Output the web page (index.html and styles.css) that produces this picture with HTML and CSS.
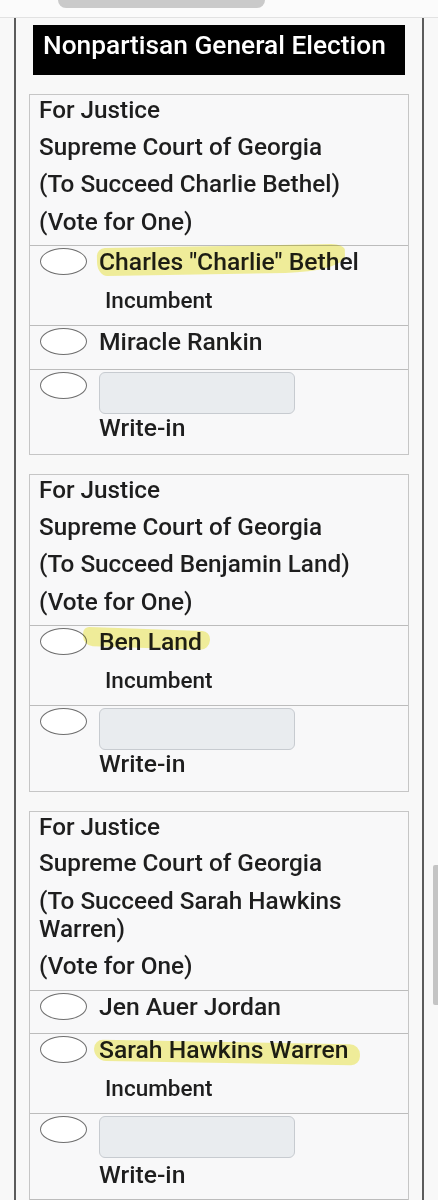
FILE: index.html
```html
<!DOCTYPE html>
<html lang="en">
<head>
<meta charset="utf-8">
<title>Ballot</title>
<link rel="stylesheet" href="styles.css">
</head>
<body>
<div class="topbar"><div class="pill"></div></div>
<main class="ballot">
  <h1 class="section-title">Nonpartisan General Election</h1>

  <section class="contest">
    <div class="contest-head">
      <p>For Justice</p>
      <p>Supreme Court of Georgia</p>
      <p>(To Succeed Charlie Bethel)</p>
      <p>(Vote for One)</p>
    </div>
    <div class="choice">
      <span class="oval"></span>
      <div class="choice-body">
        <span class="name">Charles &quot;Charlie&quot; Bethel<span class="hl hl-bethel"></span></span>
        <span class="note">Incumbent</span>
      </div>
    </div>
    <div class="choice">
      <span class="oval"></span>
      <div class="choice-body">
        <span class="name">Miracle Rankin</span>
      </div>
    </div>
    <div class="choice">
      <span class="oval"></span>
      <div class="choice-body">
        <span class="writein-box"></span>
        <span class="writein-label">Write-in</span>
      </div>
    </div>
  </section>

  <section class="contest">
    <div class="contest-head">
      <p>For Justice</p>
      <p>Supreme Court of Georgia</p>
      <p>(To Succeed Benjamin Land)</p>
      <p>(Vote for One)</p>
    </div>
    <div class="choice">
      <span class="oval"></span>
      <div class="choice-body">
        <span class="name">Ben Land<span class="hl hl-land"></span></span>
        <span class="note">Incumbent</span>
      </div>
    </div>
    <div class="choice">
      <span class="oval"></span>
      <div class="choice-body">
        <span class="writein-box"></span>
        <span class="writein-label">Write-in</span>
      </div>
    </div>
  </section>

  <section class="contest">
    <div class="contest-head">
      <p>For Justice</p>
      <p>Supreme Court of Georgia</p>
      <p>(To Succeed Sarah Hawkins Warren)</p>
      <p>(Vote for One)</p>
    </div>
    <div class="choice">
      <span class="oval"></span>
      <div class="choice-body">
        <span class="name">Jen Auer Jordan</span>
      </div>
    </div>
    <div class="choice">
      <span class="oval"></span>
      <div class="choice-body">
        <span class="name">Sarah Hawkins Warren<span class="hl hl-warren"></span></span>
        <span class="note">Incumbent</span>
      </div>
    </div>
    <div class="choice choice-last">
      <span class="oval"></span>
      <div class="choice-body">
        <span class="writein-box"></span>
        <span class="writein-label">Write-in</span>
      </div>
    </div>
    <div class="choice">
      <span class="oval"></span>
      <div class="choice-body">
        <span class="writein-box"></span>
      </div>
    </div>
  </section>
</main>
<div class="scrollbar"></div>
</body>
</html>
```
FILE: styles.css
```css
html, body {
  margin: 0;
  padding: 0;
  height: 1200px;
  overflow: hidden;
}
body {
  background: #f8f8f8;
  font-family: Roboto, "Noto Sans", "Liberation Sans", sans-serif;
  color: #1e1e1e;
}
.topbar {
  height: 17px;
  background: #fbfbfb;
  border-bottom: 1px solid #e2e2e2;
}
.pill {
  width: 207px;
  height: 8px;
  margin-left: 58px;
  background: #cacaca;
  border-radius: 0 0 10px 10px;
}
.ballot {
  margin-left: 14px;
  width: 406px;
  border-left: 2px solid #5c5c5c;
  border-right: 2px solid #5c5c5c;
  padding-top: 7px;
  min-height: 1300px;
}
.section-title {
  margin: 0 17px;
  height: 50px;
  box-sizing: border-box;
  padding: 5px 10px 15px;
  background: #000;
  color: #fff;
  font-size: 26.3px;
  font-weight: 500;
  line-height: 30px;
  white-space: nowrap;
}
.contest {
  margin: 19px 13px 19px;
  border: 1px solid #c6c6c6;
  background: #f8f8f9;
}
.contest-head {
  padding: 0 9px;
}
.contest-head p {
  margin: 0 0 9.5px;
  font-size: 24.3px;
  font-weight: 500;
  line-height: 28px;
}
.contest-head p:first-child {
  margin-top: 1px;
  margin-bottom: 8.5px;
}
.choice {
  display: flex;
  align-items: flex-start;
  border-top: 1px solid #bcbcbc;
  padding: 2px 0 3px 10px;
}
.choice-last .writein-label {
  margin-top: 3px;
  margin-bottom: 6.5px;
}
.oval {
  flex: none;
  width: 47px;
  height: 27px;
  box-sizing: border-box;
  border: 1px solid #6f6f6f;
  border-radius: 50%;
  background: #fff;
}
.choice-body {
  display: flex;
  flex-direction: column;
  align-items: flex-start;
  margin-left: 12px;
}
.name {
  position: relative;
  font-size: 24.7px;
  font-weight: 500;
  line-height: 28px;
  margin-bottom: 9.5px;
  white-space: nowrap;
}
.note {
  margin-left: 6px;
  font-size: 22.5px;
  font-weight: 500;
  line-height: 28px;
  margin-bottom: 8.5px;
}
.writein-box {
  width: 196px;
  height: 42px;
  box-sizing: border-box;
  background: #e9ecef;
  border: 1px solid #c7cbd0;
  border-radius: 6px;
}
.writein-label {
  font-size: 24.7px;
  font-weight: 500;
  line-height: 28px;
  margin-bottom: 9.5px;
}
.hl {
  position: absolute;
  background: rgba(242, 238, 110, 0.68);
  mix-blend-mode: multiply;
  pointer-events: none;
}
.hl-bethel {
  left: -2px;
  top: -2px;
  width: 248px;
  height: 28px;
  border-radius: 8px 14px 60px 10px / 8px 6px 16px 14px;
  transform: rotate(-1deg);
}
.hl-land {
  left: -16px;
  top: 1px;
  width: 127px;
  height: 19px;
  border-radius: 6px 8px 10px 10px;
  transform: rotate(2deg);
}
.hl-warren {
  left: -5px;
  top: 6px;
  width: 266px;
  height: 21px;
  border-radius: 10px 12px 10px 14px;
  transform: rotate(1deg);
}
.scrollbar {
  position: fixed;
  right: 0;
  top: 865px;
  width: 5px;
  height: 140px;
  background: #c4c4c4;
  border-radius: 2px 0 0 2px;
}
```
